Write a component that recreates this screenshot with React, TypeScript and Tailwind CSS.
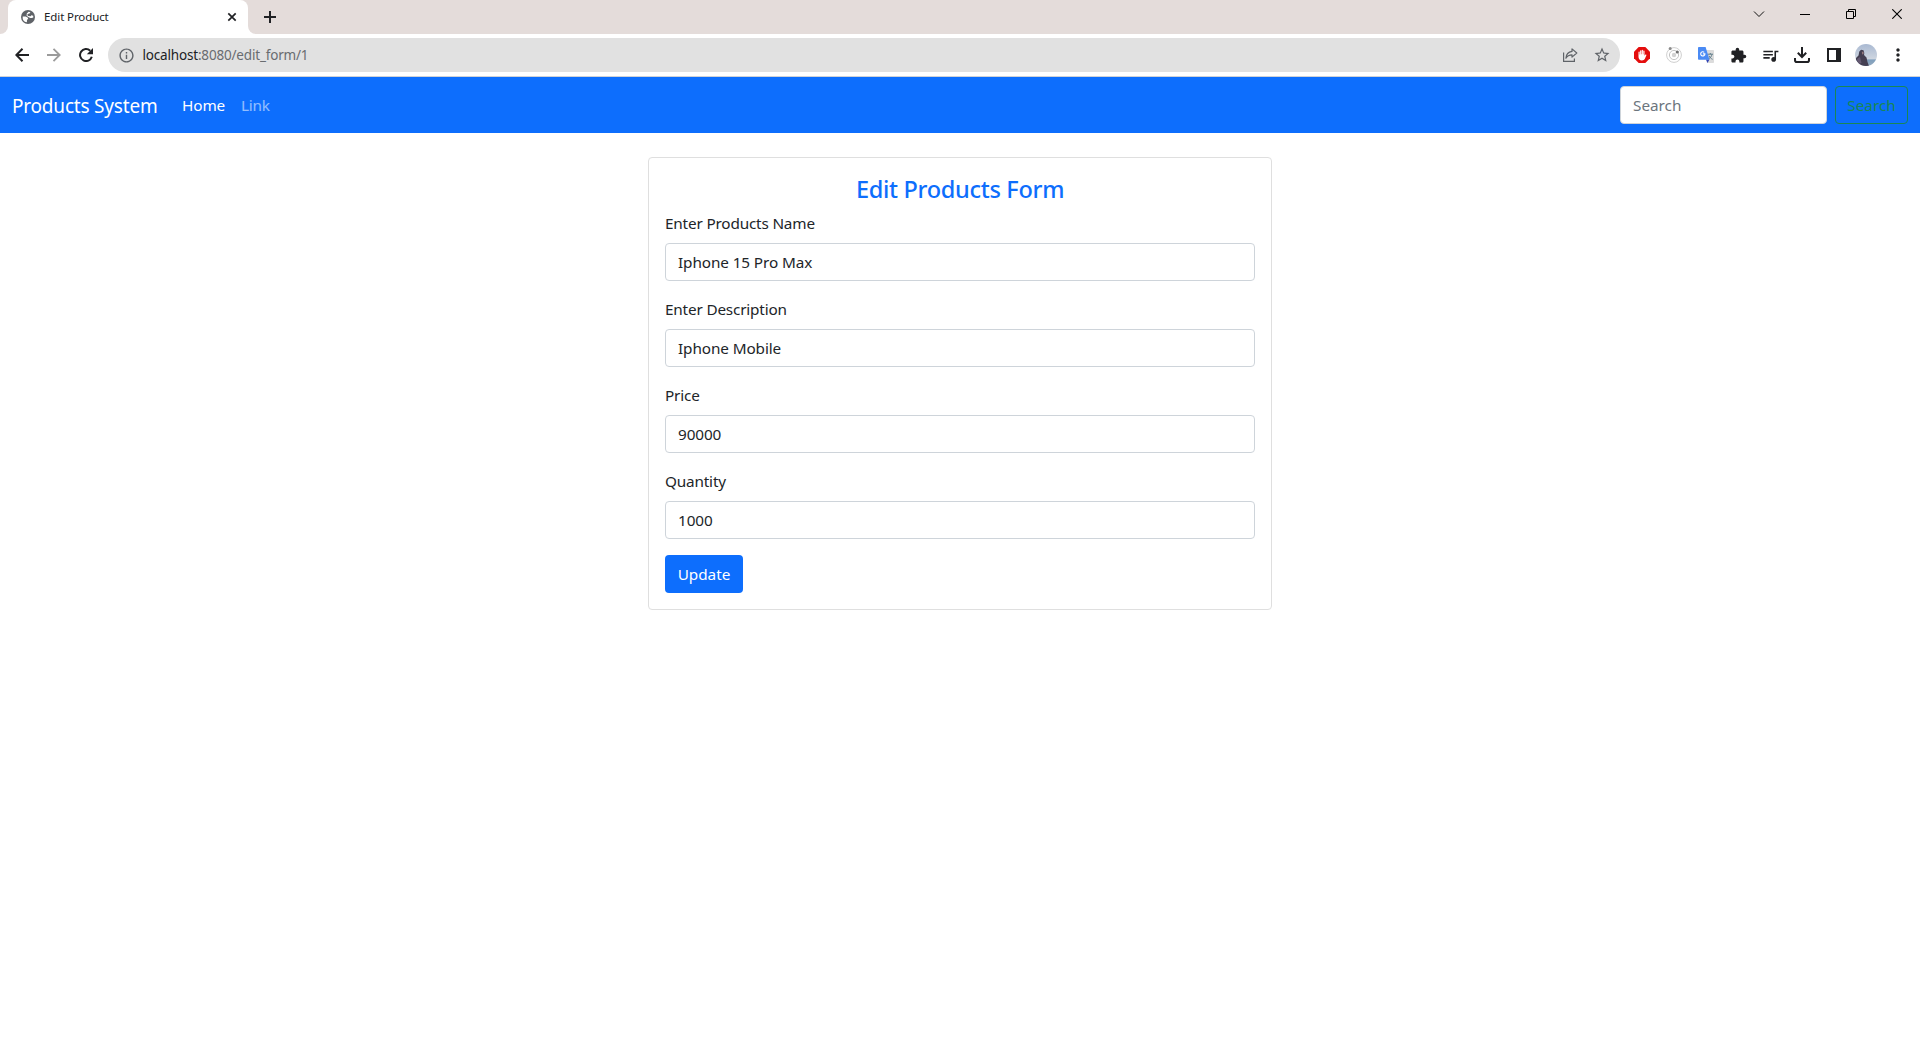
import type { ReactNode } from "react";
import { MdExtension, MdMoreVert, MdOutlineInfo, MdQueueMusic, MdStarBorder } from "react-icons/md";

function GlobeIcon() {
  return (
    <svg width="14" height="14" viewBox="0 0 14 14">
      <circle cx="7" cy="7" r="7" fill="#5f6368" />
      <path
        d="M7.600 1.700 9.400 2.200 8.600 3.500 6.800 3.900 6.300 5 7.200 6 9.700 6.300 10.300 5.200 12.200 5.800 12.300 7.600 10.800 8 9.200 7.900 7.300 7 5.600 5.800 5.800 3.500ZM1.700 6.400 4.600 6.500 6.600 7.600 7.200 8.900 6 9.800 5.900 12.300A5.400 5.400 0 0 1 1.700 6.400Z"
        fill="#fff"
      />
    </svg>
  );
}

function BackIcon() {
  return (
    <svg width="14" height="14" viewBox="0 0 14 14" fill="none" stroke="#202124" strokeWidth="2">
      <path d="M14 7H1.500M7.500.8 1.300 7 7.500 13.200" />
    </svg>
  );
}

function ForwardIcon() {
  return (
    <svg width="14" height="14" viewBox="0 0 14 14" fill="none" stroke="#9b9b9b" strokeWidth="1.800">
      <path d="M0 7H12.500M6.500.8 12.700 7 6.500 13.200" />
    </svg>
  );
}

function ReloadIcon() {
  return (
    <svg width="14" height="14" viewBox="0 0 14 14">
      <path d="M12.800 8.800A6 6 0 1 1 11.200 2.700" fill="none" stroke="#202124" strokeWidth="2" />
      <path d="M14 0V6.200H7.800Z" fill="#202124" />
    </svg>
  );
}

function ShareIcon() {
  return (
    <svg width="16" height="16" viewBox="0 0 16 16" fill="none" stroke="#5f6368" strokeWidth="1.2">
      <path d="M1.6 5.5V14.4H12.4V11.6" />
      <path d="M10 1.9 14.8 6 10 10.1V7.8C7.2 7.8 5.2 8.8 3.9 11.2 4.2 7.6 6.2 4.9 10 4.4Z" strokeLinejoin="round" />
    </svg>
  );
}

function BlockerIcon() {
  return (
    <svg width="16" height="16" viewBox="0 0 16 16">
      <path d="M4.7 0H11.3L16 4.7V11.3L11.3 16H4.7L0 11.3V4.7Z" fill="#e40d0d" />
      <path
        d="M4.500 5.200a.6.6 0 0 1 1.200 0V7.500H6.100V3.900a.6.6 0 0 1 1.200 0V7.300H7.700V3.300a.6.6 0 0 1 1.200 0V7.300H9.300V4a.6.6 0 0 1 1.200 0V8.800l.7-1c.5-.6 1.400-.2 1.200.4L10.900 11.800C10.300 13 9.300 13.400 7.900 13.400 5.800 13.400 4.500 12 4.500 10Z"
        fill="#fff"
      />
    </svg>
  );
}

function OrbitIcon() {
  return (
    <svg width="16" height="16" viewBox="0 0 16 16" fill="none">
      <circle cx="8" cy="8" r="7.4" stroke="#cfcfcf" strokeWidth="1" />
      <circle cx="8" cy="8" r="4.6" stroke="#c4c4c4" strokeWidth="1" />
      <circle cx="8" cy="8" r="2.2" fill="#d2d2d2" />
      <circle cx="4.2" cy="1.6" r="1.5" fill="#8a8a8a" />
      <circle cx="11.3" cy="5" r="1.6" fill="#707070" />
    </svg>
  );
}

function TranslateIcon() {
  return (
    <svg width="16" height="16" viewBox="0 0 16 16">
      <path d="M6 3H15.200Q16 3 16 3.800V15.200Q16 16 15.200 16H9Z" fill="#dcdcdc" />
      <path d="M9.500 7.200H15M12.300 6V7.200M14 7.200C13.600 9.500 12.200 11 10.500 12M11 8.800C11.800 10.500 13 11.600 14.600 12.300" stroke="#607d8b" strokeWidth="1" fill="none" />
      <path d="M8 12.500H11.500L9.500 16Z" fill="#3044b8" />
      <path d="M.8 0H7.600L11.500 12.800H.8Q0 12.800 0 12V.8Q0 0 .8 0Z" fill="#4a8af4" />
      <path d="M6.200 5.300A2.100 2.100 0 1 0 6.900 6.900H4.900" stroke="#fff" strokeWidth="1.1" fill="none" />
    </svg>
  );
}

function DownloadIcon() {
  return (
    <svg width="16" height="16" viewBox="0 0 16 16" fill="none" stroke="#202124" strokeWidth="2">
      <path d="M8 0V9.500M3.800 5.800 8 10 12.200 5.800" />
      <path d="M1 11V13.200Q1 15 2.800 15H13.200Q15 15 15 13.200V11" />
    </svg>
  );
}

function SidePanelIcon() {
  return (
    <svg width="14" height="14" viewBox="0 0 14 14">
      <path d="M0 0H14V14H0ZM2 2V12H9V2Z" fill="#202124" fillRule="evenodd" />
    </svg>
  );
}

function Avatar() {
  return (
    <svg width="22" height="22" viewBox="0 0 22 22">
      <defs>
        <clipPath id="avatar">
          <circle cx="11" cy="11" r="11" />
        </clipPath>
        <linearGradient id="sky" x1="0" y1="0" x2="0" y2="1">
          <stop offset="0" stopColor="#a9b9d2" />
          <stop offset=".68" stopColor="#cfd6e0" />
          <stop offset=".72" stopColor="#7f9fbd" />
          <stop offset="1" stopColor="#93a9bf" />
        </linearGradient>
      </defs>
      <g clipPath="url(#avatar)">
        <rect width="22" height="22" fill="url(#sky)" />
        <path d="M0 22 1 14 3.500 11.500 4.300 7.500 6 5.800 8.500 6.200 9.300 9 9 11 11.500 13.500 12.500 18 14 22Z" fill="#443f52" />
        <path d="M6.800 7.800 8.500 7.800 8.600 10 7.200 10.600Z" fill="#967b80" />
        <path d="M2 15 5 13 6.500 19 3 20Z" fill="#655a72" />
      </g>
    </svg>
  );
}

function Slot({ children }: { children: ReactNode }) {
  return <div className="flex h-8 w-8 shrink-0 items-center justify-center">{children}</div>;
}

function WindowSlot({ children }: { children: ReactNode }) {
  return <div className="flex h-7 w-[46px] items-center justify-center">{children}</div>;
}

function TabStrip() {
  return (
    <div className="flex h-[34px] justify-between bg-[#e4dcda]">
      <div className="flex">
        <div className="w-2 bg-white">
          <div className="h-full rounded-br-lg bg-[#e4dcda]" />
        </div>
        <div className="bg-[#e4dcda]">
          <div className="flex h-full w-[240px] items-center rounded-t-lg bg-white pr-[11px] pl-[13px]">
            <GlobeIcon />
            <span className="ml-[9px] flex-1 text-[11.5px] tracking-[-0.1px] text-[#202124]">Edit Product</span>
            <svg width="10" height="10" viewBox="0 0 10 10" stroke="#202124" strokeWidth="1.7">
              <path d="M1.300 1.300 8.700 8.700M8.700 1.300 1.300 8.700" />
            </svg>
          </div>
        </div>
        <div className="w-2 bg-white">
          <div className="h-full rounded-bl-lg bg-[#e4dcda]" />
        </div>
        <svg className="mt-[11px] ml-2" width="12" height="12" viewBox="0 0 12 12" stroke="#202124" strokeWidth="2">
          <path d="M6 0V12M0 6H12" />
        </svg>
      </div>
      <div className="flex">
        <WindowSlot>
          <svg width="12" height="8" viewBox="0 0 12 8" fill="none" stroke="#111">
            <path d="M1 1.500 6 6.500 11 1.500" />
          </svg>
        </WindowSlot>
        <WindowSlot>
          <div className="mt-px h-px w-[10px] bg-black" />
        </WindowSlot>
        <WindowSlot>
          <svg width="10" height="10" viewBox="0 0 10 10" fill="none" stroke="#000">
            <path d="M.5 2.500H7.500V9.500H.5ZM2.500 2.500V.5H9.500V7.500H7.500" />
          </svg>
        </WindowSlot>
        <WindowSlot>
          <svg width="10" height="10" viewBox="0 0 10 10" stroke="#000" strokeWidth="1.100">
            <path d="M.3.3 9.700 9.700M9.700.3.3 9.700" />
          </svg>
        </WindowSlot>
      </div>
    </div>
  );
}

function Toolbar() {
  return (
    <div className="flex h-[43px] items-center border-b border-[#d0d2d6] bg-white px-1.5">
      <Slot><BackIcon /></Slot>
      <Slot><ForwardIcon /></Slot>
      <Slot><ReloadIcon /></Slot>
      <div className="ml-1.5 flex h-[34px] flex-1 items-center rounded-full bg-[#e1e1e1] pr-0.5 pl-[9.5px]">
        <MdOutlineInfo size={17} color="#5f6368" />
        <div className="ml-2 flex-1 text-[13.5px] tracking-[-0.18px] text-[#696c70]">
          <span className="text-[#202124]">localhost</span>:8080/edit_form/1
        </div>
        <Slot><ShareIcon /></Slot>
        <Slot><MdStarBorder size={18} color="#5f6368" /></Slot>
      </div>
      <div className="ml-1.5 flex">
        <Slot><BlockerIcon /></Slot>
        <Slot><OrbitIcon /></Slot>
        <Slot><TranslateIcon /></Slot>
        <Slot><MdExtension size={17} color="#202124" /></Slot>
        <Slot><MdQueueMusic size={19} color="#202124" /></Slot>
        <Slot><DownloadIcon /></Slot>
        <Slot><SidePanelIcon /></Slot>
        <Slot><Avatar /></Slot>
        <Slot><MdMoreVert size={20} color="#202124" /></Slot>
      </div>
    </div>
  );
}

function Navbar() {
  return (
    <nav className="flex h-14 items-center bg-[#0d6efd] px-3">
      <a className="w-[145px] pt-px text-[19px] leading-[30px] tracking-[-0.2px] whitespace-nowrap text-white">
        Products System
      </a>
      <a className="ml-[25px] w-[43px] tracking-[-0.1px] text-white">Home</a>
      <a className="ml-4 tracking-[-0.2px] text-white/55">Link</a>
      <input
        className="ml-auto h-[38px] w-[207px] rounded border border-[#ced4da] bg-white px-3 text-[#212529] placeholder:text-[#6c757d]"
        placeholder="Search"
      />
      <button className="ml-2 h-[38px] w-[73px] rounded border border-[#198754] text-[#198754]">Search</button>
    </nav>
  );
}

const fields = [
  { label: "Enter Products Name", value: "Iphone 15 Pro Max" },
  { label: "Enter Description", value: "Iphone Mobile" },
  { label: "Price", value: "90000" },
  { label: "Quantity", value: "1000" },
];

function ProductForm() {
  return (
    <form className="mx-auto mt-6 w-[624px] rounded border border-[#dfdfdf] p-4 text-[#212529]">
      <h1 className="mb-[7px] pt-px text-center text-[23.500px] leading-[29px] font-medium tracking-[-0.3px] text-[#0d6efd]">
        Edit Products Form
      </h1>
      {fields.map((field) => (
        <label key={field.label} className="mb-4 block">
          <span className="mb-2 block leading-6 tracking-[-0.17px]">{field.label}</span>
          <input
            className="block h-[38px] w-full rounded border border-[#ced4da] bg-white px-3 tracking-[-0.1px]"
            defaultValue={field.value}
          />
        </label>
      ))}
      <button type="button" className="block h-[38px] w-[78px] rounded bg-[#0d6efd] text-white">
        Update
      </button>
    </form>
  );
}

export default function App() {
  return (
    <div className="h-[1040px] overflow-hidden bg-white font-['Segoe_UI','Noto_Sans',sans-serif] text-[15.3px]">
      <TabStrip />
      <Toolbar />
      <Navbar />
      <ProductForm />
    </div>
  );
}
